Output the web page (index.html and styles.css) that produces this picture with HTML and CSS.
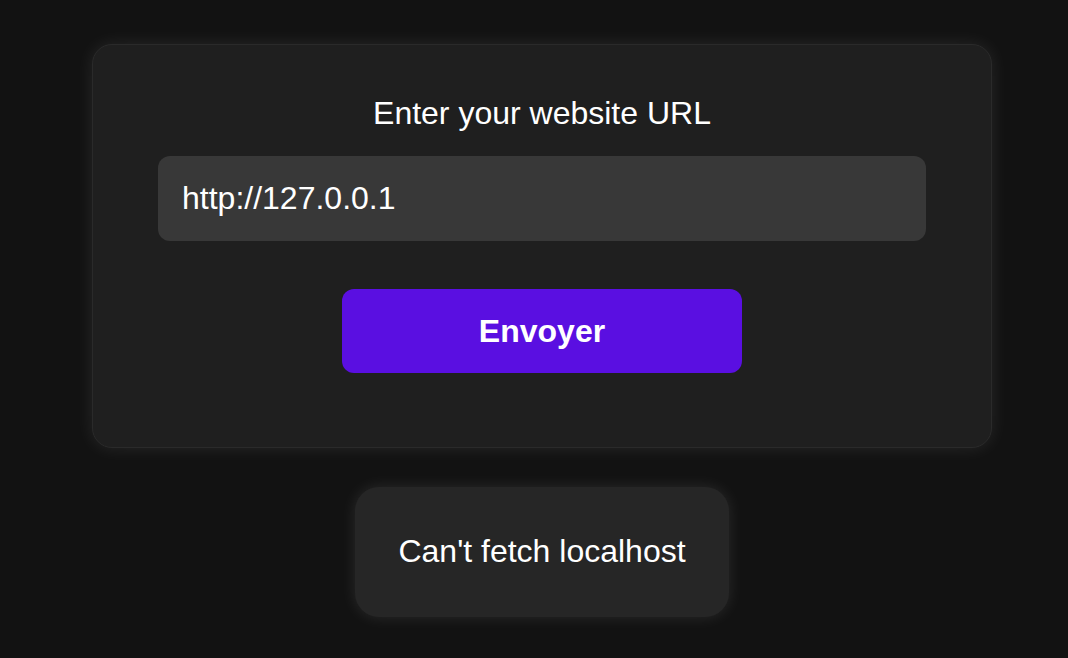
FILE: index.html
```html
<!DOCTYPE html>
<html lang="en">
<head>
<meta charset="utf-8">
<title>Website URL</title>
<link rel="stylesheet" href="styles.css">
</head>
<body>
<main class="page">
  <section class="card">
    <h2 class="card-title">Enter your website URL</h2>
    <div class="url-field">http://127.0.0.1</div>
    <button class="submit-btn" type="button">Envoyer</button>
  </section>
  <div class="message">Can't fetch localhost</div>
</main>
</body>
</html>
```

FILE: styles.css
```css
html, body {
  margin: 0;
  padding: 0;
  background: #121212;
  height: 100%;
}

body {
  font-family: "Liberation Sans", Arial, sans-serif;
  color: #ffffff;
}

.page {
  display: flex;
  flex-direction: column;
  align-items: center;
  padding: 44px 0 0 16px;
  gap: 39px;
}

.card {
  box-sizing: border-box;
  width: 900px;
  display: flex;
  flex-direction: column;
  align-items: center;
  padding: 50px 65px 74px;
  background: #1f1f1f;
  border: 1px solid #2a2a2a;
  border-radius: 20px;
  box-shadow: 0 0 18px rgba(255, 255, 255, 0.09);
}

.card-title {
  margin: 0 0 24px;
  font-size: 32px;
  font-weight: normal;
  line-height: 37px;
}

.url-field {
  box-sizing: border-box;
  width: 768px;
  padding: 24px;
  background: #383838;
  border-radius: 12px;
  font-size: 32px;
  line-height: 37px;
  color: #ffffff;
}

.submit-btn {
  margin-top: 48px;
  width: 400px;
  padding: 24px 0;
  border: none;
  border-radius: 12px;
  background: #5a0fe1;
  color: #ffffff;
  font-family: "Liberation Sans", Arial, sans-serif;
  font-size: 32px;
  font-weight: bold;
  line-height: 36px;
}

.message {
  padding: 46px 43px 47px;
  background: #262626;
  border-radius: 24px;
  font-size: 32px;
  line-height: 37px;
  box-shadow: 0 0 16px rgba(255, 255, 255, 0.1);
}
```
